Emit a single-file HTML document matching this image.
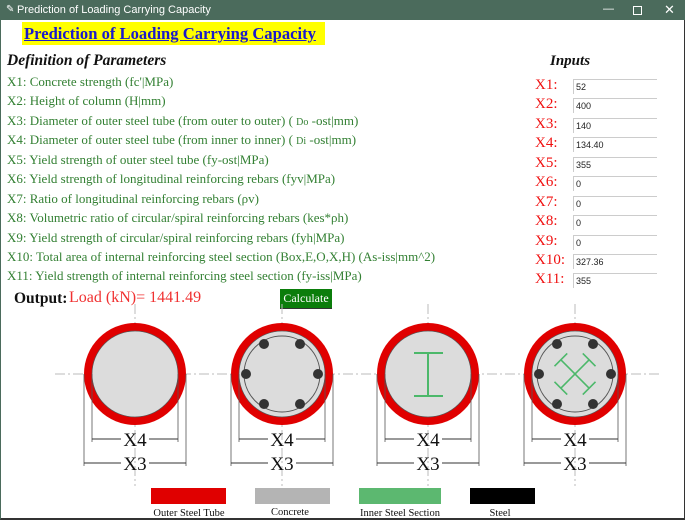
<!DOCTYPE html>
<html><head><meta charset="utf-8"><style>
body{margin:0;width:685px;height:520px;overflow:hidden;background:#fff;font-family:"Liberation Serif",serif;position:relative}
.tb{position:absolute;left:0;top:0;width:685px;height:20px;background:#4b6b5c;color:#fff;font-family:"Liberation Sans",sans-serif;font-size:11px;line-height:20px}
.frame{position:absolute;left:0;top:20px;width:683px;height:498px;border-right:2px solid #333;border-bottom:2px solid #333;border-left:1px solid #4b6b5c}
.t{position:absolute;white-space:nowrap}
.g{color:#338033;font-size:13px;left:7px}
.lab{color:#f01010;font-size:15px;left:535px}
.in{position:absolute;left:573px;width:84px;height:15px;border-top:1px solid #ccc;border-left:1px solid #ccc;font-family:"Liberation Sans",sans-serif;font-size:9px;line-height:15px;padding-left:2px;box-sizing:border-box;color:#222}
</style></head><body>
<div class="tb"><span style="position:absolute;left:6px;font-size:10px">✎</span><span style="position:absolute;left:17px">Prediction of Loading Carrying Capacity</span>
<span style="position:absolute;left:603px;top:-1px">—</span><span style="position:absolute;left:633px;top:6px;width:7px;height:7px;border:1px solid #fff"></span><span style="position:absolute;left:664px;font-size:13px">✕</span></div>
<div class="frame"></div>
<div class="t" style="left:22px;top:22px;width:303px;height:23px;background:#ffff00"></div>
<div class="t" style="left:24px;top:23px;color:#1a1acc;font-weight:bold;font-size:16.6px;text-decoration:underline;line-height:21px">Prediction of Loading Carrying Capacity</div>
<div class="t" style="left:7px;top:52px;font-size:15.5px;font-style:italic;font-weight:bold;color:#111">Definition of Parameters</div>
<div class="t" style="left:550px;top:53px;font-size:15px;font-style:italic;font-weight:bold;color:#111">Inputs</div>
<div class="t g" style="top:74px">X1: Concrete strength (fc'|MPa)</div>
<div class="t g" style="top:93px">X2: Height of column (H|mm)</div>
<div class="t g" style="top:113px">X3: Diameter of outer steel tube (from outer to outer) ( <span style="font-size:10px">Do</span> -ost|mm)</div>
<div class="t g" style="top:132px">X4: Diameter of outer steel tube (from inner to inner) ( <span style="font-size:10px">Di</span> -ost|mm)</div>
<div class="t g" style="top:152px">X5: Yield strength of outer steel tube (fy-ost|MPa)</div>
<div class="t g" style="top:171px">X6: Yield strength of longitudinal reinforcing rebars (fyv|MPa)</div>
<div class="t g" style="top:191px">X7: Ratio of longitudinal reinforcing rebars (ρv)</div>
<div class="t g" style="top:210px">X8: Volumetric ratio of circular/spiral reinforcing rebars (kes*ρh)</div>
<div class="t g" style="top:230px">X9: Yield strength of circular/spiral reinforcing rebars (fyh|MPa)</div>
<div class="t g" style="top:249px">X10: Total area of internal reinforcing steel section (Box,E,O,X,H) (As-iss|mm^2)</div>
<div class="t g" style="top:268px">X11: Yield strength of internal reinforcing steel section (fy-iss|MPa)</div>

<div class="t lab" style="top:77px">X1:</div><div class="in" style="top:79px">52</div>
<div class="t lab" style="top:96px">X2:</div><div class="in" style="top:98px">400</div>
<div class="t lab" style="top:116px">X3:</div><div class="in" style="top:118px">140</div>
<div class="t lab" style="top:135px">X4:</div><div class="in" style="top:137px">134.40</div>
<div class="t lab" style="top:155px">X5:</div><div class="in" style="top:157px">355</div>
<div class="t lab" style="top:174px">X6:</div><div class="in" style="top:176px">0</div>
<div class="t lab" style="top:194px">X7:</div><div class="in" style="top:196px">0</div>
<div class="t lab" style="top:213px">X8:</div><div class="in" style="top:215px">0</div>
<div class="t lab" style="top:233px">X9:</div><div class="in" style="top:235px">0</div>
<div class="t lab" style="top:252px">X10:</div><div class="in" style="top:254px">327.36</div>
<div class="t lab" style="top:271px">X11:</div><div class="in" style="top:273px">355</div>

<div class="t" style="left:14px;top:290px;font-size:15.5px;font-weight:bold;color:#111">Output:</div>
<div class="t" style="left:69px;top:289px;font-size:16px;color:#f03030">Load (kN)= 1441.49</div>
<div class="t" style="left:280px;top:289px;width:52px;height:19px;background:#0b7d0b;color:#fff;font-size:12px;line-height:19px;text-align:center;border-bottom:1px solid #333">Calculate</div>

<svg style="position:absolute;left:0;top:0" width="685" height="520" font-family="Liberation Serif,serif">
<defs>
<g id="base">
<line x1="0" y1="-70" x2="0" y2="112" stroke="#bbb" stroke-width="1" stroke-dasharray="10,3,2,3"/>
<circle r="51" fill="#e00000"/>
<circle r="43" fill="#dcdcdc" stroke="#555" stroke-width="0.7"/>
<line x1="-43" y1="0" x2="-43" y2="68" stroke="#555" stroke-width="0.8"/><line x1="43" y1="0" x2="43" y2="68" stroke="#555" stroke-width="0.8"/>
<line x1="-51" y1="0" x2="-51" y2="92" stroke="#555" stroke-width="0.8"/><line x1="51" y1="0" x2="51" y2="92" stroke="#555" stroke-width="0.8"/>
<line x1="-43" y1="65" x2="-14" y2="65" stroke="#333"/><line x1="14" y1="65" x2="43" y2="65" stroke="#333"/>
<line x1="-51" y1="89" x2="-14" y2="89" stroke="#333"/><line x1="14" y1="89" x2="51" y2="89" stroke="#333"/>
<text x="0" y="72" text-anchor="middle" font-size="19" fill="#111">X4</text>
<text x="0" y="96" text-anchor="middle" font-size="19" fill="#111">X3</text>
</g>
<g id="bars">
<circle r="38" fill="none" stroke="#555" stroke-width="1"/>
<circle cx="-18" cy="-30" r="5" fill="#333"/><circle cx="18" cy="-30" r="5" fill="#333"/>
<circle cx="-36" cy="0" r="5" fill="#333"/><circle cx="36" cy="0" r="5" fill="#333"/>
<circle cx="-18" cy="30" r="5" fill="#333"/><circle cx="18" cy="30" r="5" fill="#333"/>
</g>
</defs>
<line x1="55" y1="374" x2="660" y2="374" stroke="#bbb" stroke-dasharray="10,3,2,3"/>
<use href="#base" x="135" y="374"/>
<use href="#base" x="282" y="374"/><use href="#bars" x="282" y="374"/>
<use href="#base" x="428" y="374"/>
<g stroke="#4cb86a" stroke-width="2" fill="none"><line x1="414" y1="353" x2="443" y2="353"/><line x1="428" y1="353" x2="428" y2="396"/><line x1="414" y1="396" x2="443" y2="396"/></g>
<use href="#base" x="575" y="374"/><use href="#bars" x="575" y="374"/>
<g stroke="#4cb86a" stroke-width="1.6" fill="none" transform="translate(575,374) rotate(45)"><line x1="-20" y1="0" x2="20" y2="0"/><line x1="0" y1="-20" x2="0" y2="20"/><line x1="-20" y1="-9" x2="-20" y2="9"/><line x1="20" y1="-9" x2="20" y2="9"/><line x1="-9" y1="-20" x2="9" y2="-20"/><line x1="-9" y1="20" x2="9" y2="20"/></g>
<rect x="151" y="488" width="75" height="16" fill="#e00000"/>
<rect x="255" y="488" width="75" height="16" fill="#b4b4b4"/>
<rect x="359" y="488" width="82" height="16" fill="#5cb870"/>
<rect x="470" y="488" width="65" height="16" fill="#000"/>
<g font-size="10.5" fill="#111" text-anchor="middle"><text x="189" y="516">Outer Steel Tube</text><text x="290" y="515">Concrete</text><text x="400" y="516">Inner Steel Section</text><text x="500" y="516">Steel</text></g>
</svg>
</body></html>
